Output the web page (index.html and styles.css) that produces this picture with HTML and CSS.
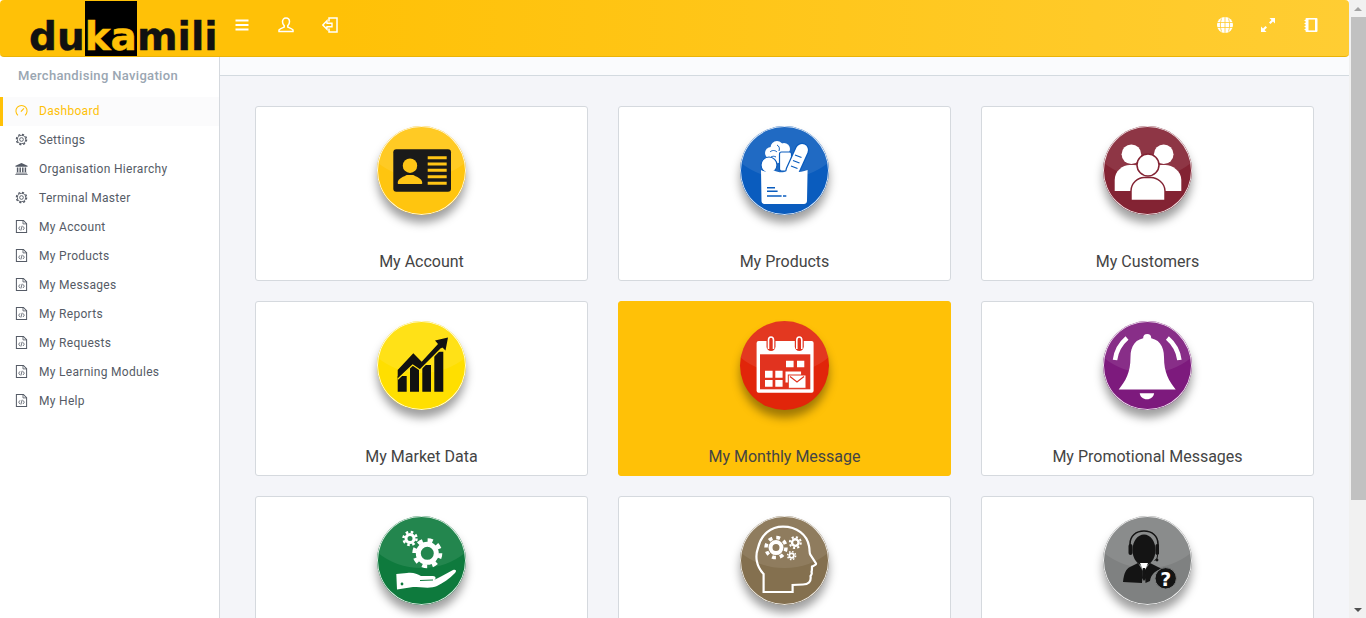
FILE: index.html
```html
<!DOCTYPE html>
<html lang="en">
<head>
    <meta charset="UTF-8">
    <meta name="viewport" content="width=device-width, initial-scale=1.0">
    <title>Dukamili Dashboard</title>
    <link rel="stylesheet" href="styles.css">
</head>
<body>
    <svg class="defs" width="0" height="0">
        <symbol id="i-gauge" viewBox="0 0 14 14">
            <path d="M3.2 12.200A6 6 0 1 1 10.8 12.200" fill="none" stroke="currentColor" stroke-width="1.100"/>
            <path d="M6.400 8.200L9.600 4.800" stroke="currentColor" stroke-width="1.300"/>
        </symbol>
        <symbol id="i-gear" viewBox="0 0 14 14">
            <circle cx="7" cy="7" r="2" fill="none" stroke="currentColor" stroke-width="1"/>
            <circle cx="7" cy="7" r="4.400" fill="none" stroke="currentColor" stroke-width="1"/>
            <circle cx="7" cy="7" r="5.500" fill="none" stroke="currentColor" stroke-width="1.400" stroke-dasharray="2.300 2"/>
        </symbol>
        <symbol id="i-bank" viewBox="0 0 14 14">
            <path d="M7 1L13.500 4V5H.5V4z" fill="currentColor"/>
            <path d="M2 6h1.600v5H2zM4.800 6h1.600v5H4.800zM7.600 6h1.600v5H7.600zM10.400 6H12v5h-1.600zM1 11.500h12v1H1zM.3 12.800h13.400v1H.3z" fill="currentColor"/>
        </symbol>
        <symbol id="i-file" viewBox="0 0 14 14">
            <path d="M1.500 .5h7.500l3.500 3.500v9.500H1.500z" fill="none" stroke="currentColor" stroke-width="1.100"/>
            <path d="M8.600 .8v3.400H12.200M5.400 6.800L4 8.800l1.400 2M8.600 6.800L10 8.800l-1.400 2M7.700 6.200l-1.400 5.200" fill="none" stroke="currentColor" stroke-width=".9"/>
        </symbol>
    </svg>

    <header class="topbar">
        <div class="logo"><span class="logo-text">du<span class="logo-box">ka</span>mili</span></div>
        <nav class="tools">
            <svg class="tool" viewBox="0 0 16 16"><path d="M1.500 3.500h13M1.500 8h13M1.500 12.500h13" stroke="#fff" stroke-width="2.200"/></svg>
            <svg class="tool tool-gap" viewBox="0 0 16 16"><path d="M8 1c2.300 0 3.500 1.700 3.500 3.800 0 1.700-.8 3-1.700 3.800v1.500c1.800.7 4.200 1.500 5.200 2.800v1.600H1v-1.600c1-1.300 3.400-2.100 5.200-2.800V8.600C5.300 7.800 4.500 6.500 4.500 4.800 4.500 2.700 5.700 1 8 1z" fill="none" stroke="#fff" stroke-width="1.500"/></svg>
            <svg class="tool tool-gap" viewBox="0 0 16 16"><path d="M7 4.500V1h8v14H7v-3.500" fill="none" stroke="#fff" stroke-width="1.500"/><path d="M.8 8L5 3.800V6.200h5v3.600H5v2.400z" fill="none" stroke="#fff" stroke-width="1.400"/></svg>
        </nav>
        <nav class="tools tools-right">
            <svg class="tool" viewBox="0 0 16 16"><circle cx="8" cy="8" r="8" fill="#fff"/><path d="M0 5.500h16M0 10.500h16M8 0v16M4.500 1.500c-1.500 4-1.500 9 0 13M11.500 1.500c1.500 4 1.500 9 0 13" fill="none" stroke="#ffcb2e" stroke-width=".8"/></svg>
            <svg class="tool tool-gap-lg" viewBox="0 0 16 16"><path d="M9.500 1H15v5.500l-2-2-2.500 2.500-1.500-1.500L11.500 3zM6.500 15H1V9.500l2 2 2.500-2.500L7 10.500 4.500 13z" fill="#fff"/></svg>
            <svg class="tool tool-gap-lg" viewBox="0 0 16 16"><rect x="2.500" y="1" width="12" height="14" rx="1" fill="#fff"/><rect x="5.500" y="2.600" width="6.500" height="10.800" fill="#ffcb2e"/><path d="M1.500 3.500h3M1.500 6.500h3M1.500 9.500h3M1.500 12.500h3" stroke="#fff" stroke-width="1"/></svg>
        </nav>
    </header>

    <div class="layout">
        <aside class="sidebar">
            <h2 class="side-title">Merchandising Navigation</h2>
            <ul class="side-menu">
                <li class="side-item active"><svg class="side-icon"><use href="#i-gauge"/></svg>Dashboard</li>
                <li class="side-item"><svg class="side-icon"><use href="#i-gear"/></svg>Settings</li>
                <li class="side-item"><svg class="side-icon"><use href="#i-bank"/></svg>Organisation Hierarchy</li>
                <li class="side-item"><svg class="side-icon"><use href="#i-gear"/></svg>Terminal Master</li>
                <li class="side-item"><svg class="side-icon"><use href="#i-file"/></svg>My Account</li>
                <li class="side-item"><svg class="side-icon"><use href="#i-file"/></svg>My Products</li>
                <li class="side-item"><svg class="side-icon"><use href="#i-file"/></svg>My Messages</li>
                <li class="side-item"><svg class="side-icon"><use href="#i-file"/></svg>My Reports</li>
                <li class="side-item"><svg class="side-icon"><use href="#i-file"/></svg>My Requests</li>
                <li class="side-item"><svg class="side-icon"><use href="#i-file"/></svg>My Learning Modules</li>
                <li class="side-item"><svg class="side-icon"><use href="#i-file"/></svg>My Help</li>
            </ul>
        </aside>

        <main class="main">
            <div class="strip"></div>
            <div class="cards">
                <a class="card">
                    <div class="badge badge-amber">
                        <svg viewBox="0 0 89 89">
                            <rect x="16.300" y="23.300" width="57.700" height="42.400" rx="3" fill="#1a1a1a"/>
                            <circle cx="33" cy="39.700" r="7.200" fill="#ffc515"/>
                            <path d="M20.700 57c0-5 7-6.500 9-8h6.600c2 1.500 9 3 9 8 0 .6-.5 1-1 1H21.700c-.5 0-1-.4-1-1z" fill="#ffc515"/>
                            <path d="M50.700 31.700h19M50.700 38h19M50.700 44.300h19M50.700 50.700h19M50.700 57.300h19" stroke="#ffc515" stroke-width="3"/>
                        </svg>
                    </div>
                    <div class="card-label">My Account</div>
                </a>
                <a class="card">
                    <div class="badge badge-blue">
                        <svg viewBox="0 0 89 89">
                            <g fill="#fff">
                                <circle cx="31" cy="27" r="6"/>
                                <circle cx="37" cy="21.500" r="6.500"/>
                                <circle cx="44" cy="23" r="6"/>
                                <circle cx="36" cy="31" r="6.500"/>
                            </g>
                            <path d="M30 26c2-2 5-2 7 0M37 19c2 1 3 3 2 6M31 31c2-1 3-1 5 0" fill="none" stroke="#0a5cbe" stroke-width="1"/>
                            <rect x="39.500" y="26" width="12" height="19" rx="2" fill="#fff" stroke="#0a5cbe" stroke-width="1.200"/>
                            <circle cx="29" cy="39" r="8" fill="#fff" stroke="#0a5cbe" stroke-width="1.200"/>
                            <path d="M52.500 45L62 24" stroke="#0a5cbe" stroke-width="14.500" stroke-linecap="round"/>
                            <path d="M52.500 45L62 24" stroke="#fff" stroke-width="12" stroke-linecap="round"/>
                            <path d="M55 29l6.500 2.500M53 34.500l6.500 2.500M51 40l6.500 2.500" stroke="#0a5cbe" stroke-width="1.300"/>
                            <path d="M21 44c4 2.500 9 2.500 13 .5 4 2 9 2.500 13 .5 6 2 13 1.500 20.600-1L67 75c0 1.800-1.500 3-3 3H25c-2 0-3.500-1.200-3.500-3z" fill="#fff"/>
                            <path d="M27 61.700h8M27 65.300h10.600M27 70h14.600M43 70h3.300" stroke="#0a5cbe" stroke-width="1.500"/>
                        </svg>
                    </div>
                    <div class="card-label">My Products</div>
                </a>
                <a class="card">
                    <div class="badge badge-maroon">
                        <svg viewBox="0 0 89 89">
                            <circle cx="28.400" cy="28.300" r="9.800" fill="#fff"/>
                            <circle cx="60.700" cy="28.300" r="9.800" fill="#fff"/>
                            <path d="M11.700 65V54c0-9 8-15 15-15h4c7 0 15 6 15 15v11z" fill="#fff"/>
                            <path d="M43.300 65V54c0-9 8-15 15-15h4c7 0 16 6 16 15v11z" fill="#fff"/>
                            <circle cx="45" cy="39" r="11" fill="#fff" stroke="#832333" stroke-width="1.500"/>
                            <path d="M28 74.500V65c0-8 7-13.500 13-13.500h7c6 0 14 5.500 14 13.500v9.500z" fill="#fff" stroke="#832333" stroke-width="1.500"/>
                        </svg>
                    </div>
                    <div class="card-label">My Customers</div>
                </a>
                <a class="card">
                    <div class="badge badge-lemon">
                        <svg viewBox="0 0 89 89">
                            <path d="M20.700 55h9v15.700h-9zM33 44h9v26.700h-9zM45.300 44H54v26.700h-8.700zM57.300 30.700h9v40h-9z" fill="#111"/>
                            <path d="M20.700 49L36.300 32.300 44.700 40.700 61 23 58 19.500 71 16.500 68.500 29.500 65.500 26.500 43 49 35.700 44 20.700 58.300z" fill="#111"/>
                            <path d="M20.700 58.300L35.700 44 43 49 64.700 27.300" fill="none" stroke="#ffe014" stroke-width="1.300"/>
                        </svg>
                    </div>
                    <div class="card-label">My Market Data</div>
                </a>
                <a class="card card-active">
                    <div class="badge badge-red">
                        <svg viewBox="0 0 89 89">
                            <rect x="16.600" y="20" width="57" height="51.700" rx="2" fill="#fff"/>
                            <rect x="20" y="33.300" width="50.300" height="35" fill="#e1331f"/>
                            <rect x="26.500" y="14.500" width="9" height="15.500" rx="4.500" fill="#e1331f"/>
                            <rect x="54.800" y="14.500" width="9" height="15.500" rx="4.500" fill="#e1331f"/>
                            <path d="M28.500 28V19c0-4 5-4 5 0v9" fill="#e1331f" stroke="#fff" stroke-width="1.600"/>
                            <path d="M56.800 28V19c0-4 5-4 5 0v9" fill="#e1331f" stroke="#fff" stroke-width="1.600"/>
                            <path d="M46 39.700h7.600v6.600H46zM57 39.700h7.300v6.600H57zM25 49.700h7.600v7H25zM35.300 49.700h7.300v7h-7.300zM25 59h7.600v6.700H25zM35.300 59h7.300v6.700h-7.300z" fill="#fff"/>
                            <rect x="45" y="50" width="16.600" height="12" fill="#fff" stroke="#e1331f"/>
                            <rect x="48.300" y="54" width="17.700" height="13.300" fill="#fff" stroke="#e1331f"/>
                            <path d="M50 55.500l7 5.500 7-5.500" fill="none" stroke="#e1331f" stroke-width="1.200"/>
                        </svg>
                    </div>
                    <div class="card-label">My Monthly Message</div>
                </a>
                <a class="card">
                    <div class="badge badge-purple">
                        <svg viewBox="0 0 89 89">
                            <circle cx="44.200" cy="17" r="4" fill="#fff"/>
                            <path d="M44.200 17C56 17 61 25 61 36 61 52 66 60 72.700 68.500H15.700C22.500 60 27.500 52 27.500 36 27.500 25 32.500 17 44.200 17z" fill="#fff"/>
                            <path d="M36.700 72.300h14.400c-.5 3.500-3.200 6-7.200 6s-6.700-2.500-7.200-6z" fill="#fff"/>
                            <path d="M12 39c1-8 5-16 12-22" fill="none" stroke="#fff" stroke-width="4.500"/>
                            <path d="M76.400 39c-1-8-5-16-12-22" fill="none" stroke="#fff" stroke-width="4.500"/>
                        </svg>
                    </div>
                    <div class="card-label">My Promotional Messages</div>
                </a>
                <a class="card">
                    <div class="badge badge-green">
                        <svg viewBox="0 0 89 89">
                            <circle cx="33" cy="22.500" r="4" fill="none" stroke="#fff" stroke-width="3"/>
                            <circle cx="33" cy="22.500" r="6.500" fill="none" stroke="#fff" stroke-width="2.500" stroke-dasharray="2.550 2.550"/>
                            <circle cx="50.300" cy="37.300" r="9" fill="none" stroke="#fff" stroke-width="5"/>
                            <circle cx="50.300" cy="37.300" r="13" fill="none" stroke="#fff" stroke-width="4" stroke-dasharray="5.100 5.100"/>
                            <path d="M19.300 58L30 57C36 56 40 58 44 60L56 60C59 60 59.500 63 57 64L64 60.500 76 54C79 53 80 55 78 57 72 63 66 67 60 70 54 73 44 71 36 71L20 73.500z" fill="#fff"/>
                            <circle cx="25" cy="68" r="1.400" fill="#0e7a3d"/>
                            <path d="M43 64.500l13-.5" stroke="#0e7a3d" stroke-width="1"/>
                        </svg>
                    </div>
                    <div class="card-label">My Requests</div>
                </a>
                <a class="card">
                    <div class="badge badge-brown">
                        <svg viewBox="0 0 89 89">
                            <path d="M23.600 76V58C16 50 15 40 18 32 21 18 31 10.600 43 10.600 57 10.600 67 19 69 30 70 35 69 37 70.500 39L76 47.500C76.500 49 73 50 72 50.500 72 53 72 55 71.500 56 72.500 58 71 59 70.500 60 71.500 66 68 68.500 63 68.500L52.600 69V76z" fill="none" stroke="#fff" stroke-width="2.200"/>
                            <circle cx="36" cy="31.600" r="5.500" fill="none" stroke="#fff" stroke-width="4"/>
                            <circle cx="36" cy="31.600" r="10" fill="none" stroke="#fff" stroke-width="3.500" stroke-dasharray="3.900 3.950"/>
                            <circle cx="55.300" cy="26.600" r="3.300" fill="none" stroke="#fff" stroke-width="2.400"/>
                            <circle cx="55.300" cy="26.600" r="5.500" fill="none" stroke="#fff" stroke-width="2" stroke-dasharray="2.150 2.150"/>
                            <circle cx="51.600" cy="39.600" r="2.300" fill="none" stroke="#fff" stroke-width="1.800"/>
                            <circle cx="51.600" cy="39.600" r="4" fill="none" stroke="#fff" stroke-width="1.500" stroke-dasharray="1.570 1.570"/>
                        </svg>
                    </div>
                    <div class="card-label">My Learning Modules</div>
                </a>
                <a class="card">
                    <div class="badge badge-grey">
                        <svg viewBox="0 0 89 89">
                            <ellipse cx="41" cy="34" rx="11.500" ry="15.500" fill="#141414"/>
                            <path d="M27 32v-4C27 20 33 15 41 15S55 20 55 28v4" fill="none" stroke="#141414" stroke-width="1.600"/>
                            <rect x="25.500" y="28" width="4" height="11" rx="2" fill="#141414"/>
                            <rect x="52.500" y="28" width="3.500" height="11" rx="1.700" fill="#141414"/>
                            <path d="M54.500 39c0 3-1 5-3 5.500" fill="none" stroke="#141414" stroke-width="1"/>
                            <circle cx="54" cy="44" r="1.400" fill="#141414"/>
                            <path d="M35 47l-8 4c-4 2-6 6-7 15l19 1 .8-12zM47 47l8 4 4 2c-6 1-11 5-12 12l-4.500 2-.7-13z" fill="#141414"/>
                            <path d="M37 47l4 9 4-9z" fill="#fff"/>
                            <path d="M40 52h2l1 10-2 3-2-3z" fill="#141414"/>
                            <circle cx="62.700" cy="62.300" r="10.700" fill="#141414" stroke="#7f8181"/>
                            <text x="62.700" y="69.500" class="help-mark">?</text>
                        </svg>
                    </div>
                    <div class="card-label">My Help</div>
                </a>
            </div>
        </main>
    </div>

    <div class="scrollbar">
        <div class="scroll-btn"><span class="arrow-up"></span></div>
        <div class="scroll-thumb"></div>
        <div class="scroll-track"></div>
        <div class="scroll-btn"><span class="arrow-down"></span></div>
    </div>
</body>
</html>
```
FILE: styles.css
```css
body {
    margin: 0;
    padding-right: 17px;
    font-family: Roboto, "Liberation Sans", sans-serif;
    background-color: #fff;
    color: #444;
}
.defs {
    position: absolute;
}
.topbar {
    display: flex;
    align-items: center;
    height: 56px;
    background: linear-gradient(90deg, #ffc107 0%, #ffc107 25%, #ffcd33 100%);
    border-bottom: 1px solid #eab308;
    border-radius: 4px;
    padding-right: 30px;
}
.logo {
    width: 220px;
    height: 56px;
    padding-left: 29px;
    box-sizing: border-box;
    flex-shrink: 0;
}
.logo-text {
    display: block;
    font-family: "DejaVu Sans", sans-serif;
    font-weight: bold;
    font-size: 39px;
    line-height: 40px;
    padding-top: 1px;
    color: #111;
    white-space: nowrap;
    -webkit-text-stroke: .4px currentColor;
}
.logo-box {
    display: inline-block;
    background-color: #000;
    color: #ffc107;
    height: 55px;
    line-height: 71px;
}
.tools {
    display: flex;
    align-items: center;
    padding-left: 14px;
    padding-bottom: 6px;
}
.tools-right {
    margin-left: auto;
    padding-left: 0;
}
.tool {
    width: 16px;
    height: 16px;
}
.tool-gap {
    margin-left: 28px;
}
.tool-gap-lg {
    margin-left: 27px;
}
.layout {
    display: flex;
    min-height: 690px;
}
.sidebar {
    width: 219px;
    flex-shrink: 0;
    background-color: #fff;
    border-right: 1px solid #d5d9de;
}
.side-title {
    margin: 0;
    padding: 11px 0 0 18px;
    height: 29px;
    font-size: 13px;
    font-weight: 500;
    line-height: 15px;
    letter-spacing: .33px;
    color: #9aa6b2;
}
.side-menu {
    list-style: none;
    margin: 0;
    padding: 0;
}
.side-item {
    display: flex;
    align-items: center;
    height: 29px;
    box-sizing: border-box;
    padding-left: 15px;
    padding-bottom: 2px;
    font-size: 12px;
    letter-spacing: .3px;
    color: #555b66;
}
.side-item.active {
    background-color: #fbfbfc;
    border-left: 3px solid #ffc107;
    padding-left: 12px;
    color: #ffc107;
}
.side-icon {
    width: 13px;
    height: 13px;
    margin-right: 11px;
    flex-shrink: 0;
}
.main {
    flex: 1;
    background-color: #f4f5f9;
}
.strip {
    height: 18px;
    background-color: #fafbfd;
    border-bottom: 1px solid #d3dae0;
}
.cards {
    display: grid;
    grid-template-columns: repeat(3, 333px);
    gap: 20px 30px;
    padding: 30px 35px;
}
.card {
    display: block;
    height: 175px;
    box-sizing: border-box;
    padding-top: 19px;
    background-color: #fff;
    border: 1px solid #d5d9de;
    border-radius: 3px;
    text-align: center;
}
.card-active {
    background-color: #ffc107;
    border-color: #ffc107;
}
.badge {
    position: relative;
    width: 89px;
    height: 89px;
    margin: 0 auto;
    border-radius: 50%;
    overflow: hidden;
    box-shadow: 0 8px 10px rgba(0, 0, 0, .38);
}
.badge::before {
    content: "";
    position: absolute;
    left: -20%;
    top: -62%;
    width: 140%;
    height: 120%;
    border-radius: 50%;
    background-color: rgba(255, 255, 255, .09);
}
.badge::after {
    content: "";
    position: absolute;
    inset: 0;
    border-radius: 50%;
    box-shadow: inset 0 0 0 1px rgba(255, 255, 255, .85);
}
.badge svg {
    position: absolute;
    left: 0;
    top: 0;
    width: 89px;
    height: 89px;
}
.badge-amber { background-color: #ffc50f; }
.badge-blue { background-color: #0a5cbe; }
.badge-maroon { background-color: #832333; }
.badge-lemon { background-color: #ffdf00; }
.badge-red { background-color: #e1250a; }
.badge-red::after { box-shadow: none; }
.badge-purple { background-color: #7d1a7d; }
.badge-green { background-color: #0e7a3d; }
.badge-brown { background-color: #84704f; }
.badge-grey { background-color: #7f8181; }
.card-label {
    margin-top: 35px;
    font-size: 16px;
    line-height: 24px;
    color: #444;
}
.help-mark {
    font-family: "DejaVu Sans", sans-serif;
    font-weight: bold;
    font-size: 19px;
    text-anchor: middle;
    fill: #fff;
}
.scrollbar {
    position: fixed;
    top: 0;
    right: 0;
    bottom: 0;
    width: 17px;
    display: flex;
    flex-direction: column;
    background-color: #f1f1f1;
}
.scroll-btn {
    display: flex;
    align-items: center;
    justify-content: center;
    height: 17px;
    flex-shrink: 0;
}
.arrow-up {
    border-left: 4px solid transparent;
    border-right: 4px solid transparent;
    border-bottom: 4px solid #a3a3a3;
}
.arrow-down {
    border-left: 4px solid transparent;
    border-right: 4px solid transparent;
    border-top: 4px solid #505050;
}
.scroll-thumb {
    height: 483px;
    margin-left: 2px;
    background-color: #c1c1c1;
}
.scroll-track {
    flex: 1;
}
```
